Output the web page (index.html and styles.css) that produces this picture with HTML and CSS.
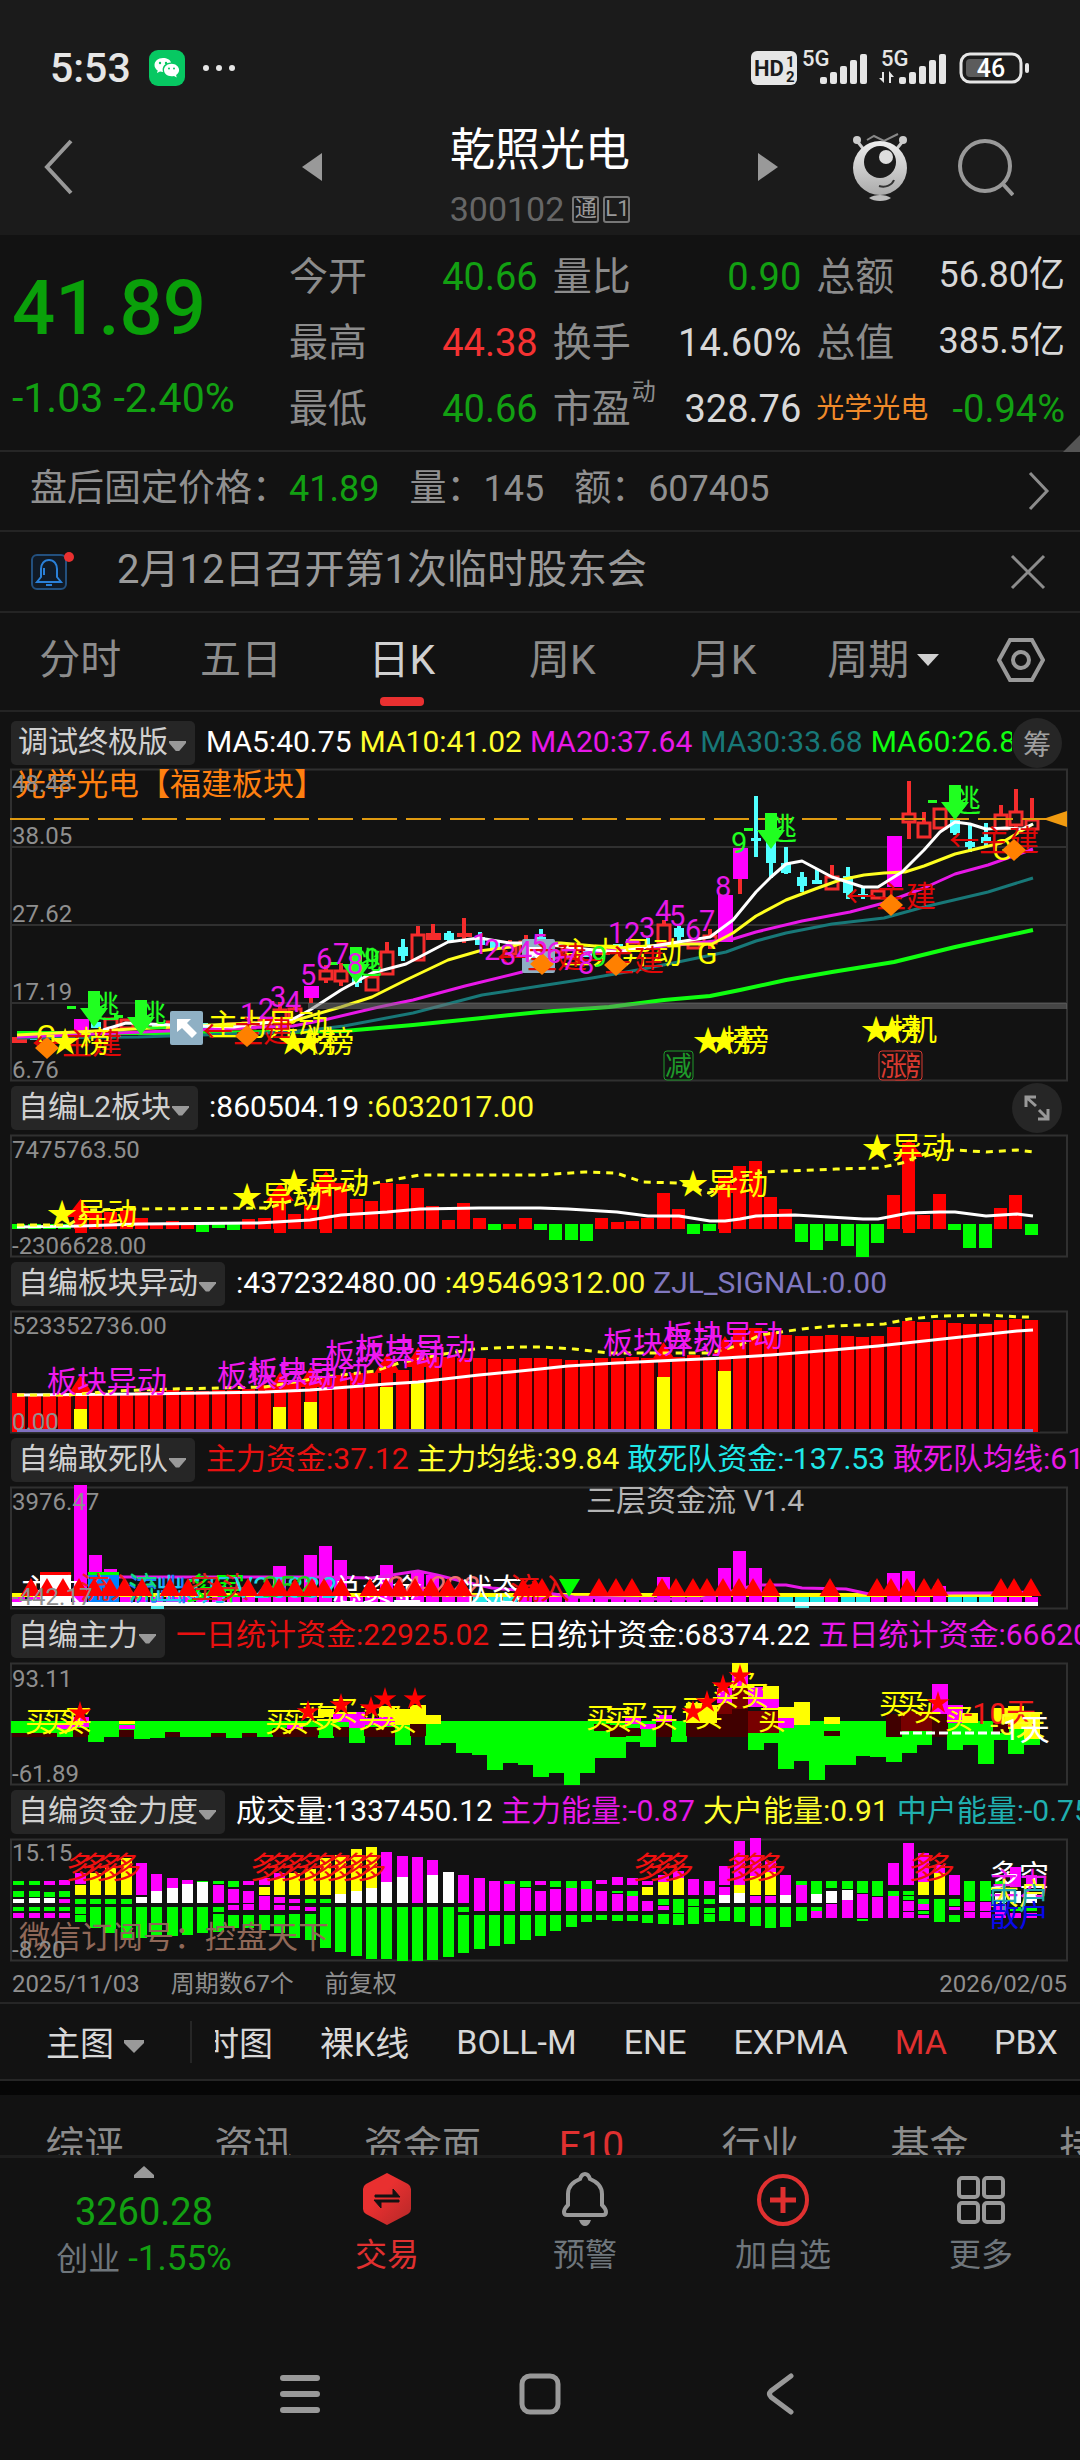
FILE: index.html
```html
<!DOCTYPE html>
<html lang="zh-CN">
<head>
<meta charset="utf-8">
<meta name="viewport" content="width=device-width, initial-scale=1">
<title>乾照光电 300102</title>
<link rel="stylesheet" href="styles.css">
</head>
<body>
<div class="top">
  <div class="status">
    <div class="status-left">
      <span class="clock">5:53</span>
      <svg class="wechat" viewBox="0 0 36 36" width="36" height="36" aria-hidden="true">
        <rect width="36" height="36" rx="9" fill="#07c862"/>
        <path d="M14 8c-5 0-8.500 3.300-8.500 7 0 2.300 1.200 4.200 3.200 5.500L8 23l3-1.500c1 .3 2 .4 3 .4-1.500-5 2-9.400 8-9.400C21.200 9.600 18 8 14 8z" fill="#fff"/>
        <path d="M22.500 13.800c-4.400 0-7.500 2.900-7.500 6.300s3.200 6.200 7.500 6.200c.9 0 1.700-.1 2.500-.3l2.700 1.600-.6-2.500c1.800-1.200 3-3 3-5 0-3.400-3.300-6.300-7.600-6.300z" fill="#fff"/>
        <g fill="#07c862"><circle cx="11" cy="13" r="1.200"/><circle cx="17" cy="13" r="1.200"/><circle cx="20" cy="18.500" r="1"/><circle cx="25" cy="18.500" r="1"/></g>
      </svg>
      <svg viewBox="0 0 32 8" width="32" height="8" aria-hidden="true"><g fill="#e6e6e6"><circle cx="3" cy="4" r="3"/><circle cx="16" cy="4" r="3"/><circle cx="29" cy="4" r="3"/></g></svg>
    </div>
    <svg class="status-right" viewBox="0 0 280 36" width="280" height="36" role="img" aria-label="HD 5G 5G 46%">
      <rect x="1" y="1" width="46" height="34" rx="6" fill="#e6e6e6"/>
      <text x="4" y="26" font-size="22" font-weight="700" fill="#1b1b1b">HD</text>
      <text x="36" y="17" font-size="15" font-weight="700" fill="#1b1b1b">1</text>
      <text x="36" y="32" font-size="15" font-weight="700" fill="#1b1b1b">2</text>
      <g fill="#e6e6e6">
        <text x="52" y="16" font-size="22" font-weight="500">5G</text>
        <text x="131" y="16" font-size="22" font-weight="500">5G</text>
        <rect x="70" y="27" width="7" height="7" rx="2"/><rect x="80" y="22" width="7" height="12" rx="2"/><rect x="90" y="16" width="7" height="18" rx="2"/><rect x="100" y="10" width="7" height="24" rx="2"/><rect x="110" y="4" width="7" height="30" rx="2"/>
        <rect x="149" y="27" width="7" height="7" rx="2"/><rect x="159" y="22" width="7" height="12" rx="2"/><rect x="169" y="16" width="7" height="18" rx="2"/><rect x="179" y="10" width="7" height="24" rx="2"/><rect x="189" y="4" width="7" height="30" rx="2"/>
        <path d="M134 22v11l-5-5h3v-6zM139 33V21l5 6h-3v6z"/>
        <rect x="275" y="13" width="4" height="10" rx="2"/>
      </g>
      <rect x="211" y="4" width="60" height="28" rx="9" fill="none" stroke="#e6e6e6" stroke-width="3"/>
      <rect x="216" y="9" width="22" height="18" rx="4" fill="#5c5c5c"/>
      <text x="241" y="27" text-anchor="middle" font-size="25" font-weight="500" fill="#fff">46</text>
    </svg>
  </div>
  <header class="header">
    <button class="icon-btn back" aria-label="返回"><svg viewBox="0 0 32 58" width="32" height="58"><path d="M28 3 4 29l24 26" class="line"/></svg></button>
    <div class="name-block">
      <button class="icon-btn" aria-label="上一只"><svg viewBox="0 0 20 28" width="20" height="28"><path d="M20 0v28L0 14z" fill="#999"/></svg></button>
      <div class="name">
        <h1>乾照光电</h1>
        <div class="code">300102 <span class="badge">通</span><span class="badge">L1</span></div>
      </div>
      <button class="icon-btn" aria-label="下一只"><svg viewBox="0 0 20 28" width="20" height="28"><path d="M0 0v28l20-14z" fill="#999"/></svg></button>
    </div>
    <div class="header-right">
      <button class="icon-btn" aria-label="智能助手">
        <svg viewBox="0 0 56 68" width="56" height="68">
          <defs><linearGradient id="body" x1="0" y1="0" x2="0" y2="1"><stop offset="0" stop-color="#eee"/><stop offset="1" stop-color="#aaa"/></linearGradient></defs>
          <path d="M5 8l8 10M51 8 43 18" stroke="#ccc" stroke-width="3"/>
          <circle cx="5" cy="7" r="4" fill="#ccc"/><circle cx="51" cy="7" r="4" fill="#ccc"/>
          <path d="M15 7l7-4 10 5 14-7" fill="none" stroke="#888" stroke-width="2"/>
          <circle cx="28" cy="35" r="27" fill="url(#body)"/>
          <circle cx="28" cy="29" r="16" fill="#1b1b1b"/><circle cx="34" cy="24" r="7" fill="#ddd"/>
          <path d="M27 53c7 2 13-1 15-6" fill="none" stroke="#333" stroke-width="2"/>
          <path d="M17 65c5-4 17-4 22 0-5 4-17 4-22 0z" fill="#bbb"/>
        </svg>
      </button>
      <button class="icon-btn" aria-label="搜索"><svg viewBox="0 0 56 58" width="56" height="58"><circle cx="27" cy="28" r="25" class="line"/><path d="M44 45l11 12" class="line"/></svg></button>
    </div>
  </header>
</div>

<section class="quote">
  <div class="last">
    <div class="price">41.89</div>
    <div class="change">-1.03 -2.40%</div>
  </div>
  <dl class="stats">
    <div><dt>今开</dt><dd class="dn">40.66</dd></div><div><dt>量比</dt><dd class="dn">0.90</dd></div><div><dt>总额</dt><dd class="small">56.80亿</dd></div>
    <div><dt>最高</dt><dd class="up">44.38</dd></div><div><dt>换手</dt><dd>14.60%</dd></div><div><dt>总值</dt><dd class="small">385.5亿</dd></div>
    <div><dt>最低</dt><dd class="dn">40.66</dd></div><div><dt>市盈<sup>动</sup></dt><dd>328.76</dd></div><div><dt class="sector">光学光电</dt><dd class="dn">-0.94%</dd></div>
  </dl>
  <svg class="corner" viewBox="0 0 17 17" width="17" height="17" aria-hidden="true"><path d="M17 0v17H0z" fill="#555"/></svg>
</section>

<a class="row after" href="#after">
  <span>盘后固定价格：<b class="dn">41.89</b></span><span>量：<b>145</b></span><span>额：<b>607405</b></span>
  <svg viewBox="0 0 22 40" width="22" height="40" aria-hidden="true"><path d="M2 2l17 18L2 38" class="thin"/></svg>
</a>
<div class="row notice">
  <svg viewBox="0 0 44 44" width="44" height="44" aria-hidden="true"><rect x="2" y="5" width="34" height="34" rx="5" fill="#101a26" stroke="#23507e" stroke-width="2"/><path d="M7 32h24l-4-5v-8c0-5-3-9-8-9s-8 4-8 9v8zM16 35h6M14 25v-7" fill="none" stroke="#2a80d8" stroke-width="2"/><circle cx="39" cy="7" r="5" fill="#e93030"/></svg>
  <a href="#notice">2月12日召开第1次临时股东会</a>
  <button class="icon-btn" aria-label="关闭"><svg viewBox="0 0 36 36" width="36" height="36"><path d="M2 2l32 32M34 2 2 34" class="thin"/></svg></button>
</div>
<nav class="periods">
  <button>分时</button><button>五日</button><button class="on">日K</button><button>周K</button><button>月K</button>
  <button>周期<svg viewBox="0 0 24 12" width="24" height="12"><path d="M1 0h22L12 12z" fill="#d0d0d0"/></svg></button>
  <button class="gear" aria-label="设置"><svg viewBox="0 0 48 44" width="48" height="44"><path d="M13 2h22l11 20-11 20H13L2 22z" class="line"/><circle cx="24" cy="22" r="8" class="line"/></svg></button>
</nav>

<main id="panels">
  <section class="panel">
    <header class="legend main"><button class="chip">调试终极版<i></i></button>
      <p><span class="c-w">MA5:40.75</span><span class="c-y">MA10:41.02</span><span class="c-m">MA20:37.64</span><span class="c-t">MA30:33.68</span><span class="c-g">MA60:26.81</span></p>
      <button class="round">筹</button></header>
    <svg class="chart" id="kline" viewBox="0 0 1080 312" role="img" aria-label="日K线"></svg>
  </section>
  <section class="panel">
    <header class="legend"><button class="chip">自编L2板块<i></i></button>
      <p><span class="c-w">:860504.19</span><span class="c-y">:6032017.00</span></p>
      <button class="round" aria-label="全屏"><svg viewBox="0 0 26 26" width="26" height="26"><path d="M2 12V2h10M2 2l10 9M24 14v10H14M24 24l-9-9" fill="none" stroke="#999" stroke-width="3"/></svg></button></header>
    <svg class="chart" id="l2" viewBox="0 0 1080 122" role="img" aria-label="自编L2板块"></svg>
  </section>
  <section class="panel">
    <header class="legend"><button class="chip">自编板块异动<i></i></button>
      <p><span class="c-w">:437232480.00</span><span class="c-y">:495469312.00</span><span class="c-p">ZJL_SIGNAL:0.00</span></p></header>
    <svg class="chart" id="sector" viewBox="0 0 1080 122" role="img" aria-label="自编板块异动"></svg>
  </section>
  <section class="panel">
    <header class="legend"><button class="chip">自编敢死队<i></i></button>
      <p><span class="c-r">主力资金:37.12</span><span class="c-y">主力均线:39.84</span><span class="c-c">敢死队资金:-137.53</span><span class="c-m">敢死队均线:61.20</span></p></header>
    <svg class="chart" id="flow" viewBox="0 0 1080 122" role="img" aria-label="自编敢死队"></svg>
  </section>
  <section class="panel">
    <header class="legend"><button class="chip">自编主力<i></i></button>
      <p><span class="c-r">一日统计资金:22925.02</span><span class="c-w">三日统计资金:68374.22</span><span class="c-m">五日统计资金:66620.10</span></p></header>
    <svg class="chart" id="major" viewBox="0 0 1080 122" role="img" aria-label="自编主力"></svg>
  </section>
  <section class="panel">
    <header class="legend"><button class="chip">自编资金力度<i></i></button>
      <p><span class="c-w">成交量:1337450.12</span><span class="c-m">主力能量:-0.87</span><span class="c-y">大户能量:0.91</span><span class="c-k">中户能量:-0.75</span></p></header>
    <svg class="chart" id="power" viewBox="0 0 1080 122" role="img" aria-label="自编资金力度"></svg>
  </section>
</main>
<div class="dates"><span>2025/11/03</span><span>周期数67个</span><span>前复权</span><span class="end">2026/02/05</span></div>

<nav class="indicators">
  <button class="pick">主图<svg viewBox="0 0 20 13" width="20" height="13"><path d="M0 0h20v3L10 13 0 3z" fill="#999"/></svg></button>
  <div class="strip"><div class="strip-in"><button>分时图</button><button>裸K线</button><button>BOLL-M</button><button>ENE</button><button>EXPMA</button><button class="on">MA</button><button>PBX</button></div></div>
</nav>
<nav class="info"><a href="#1">综评</a><a href="#2">资讯</a><a href="#3">资金面</a><a href="#4" class="on">F10</a><a href="#5">行业</a><a href="#6">基金</a><a href="#7">持仓</a></nav>

<footer class="dock">
  <a class="index" href="#index">
    <svg viewBox="0 0 20 12" width="20" height="12"><path d="M10 0l10 9v3H0V9z" fill="#999"/></svg>
    <span class="pts">3260.28</span>
    <span class="idx">创业 <b>-1.55%</b></span>
  </a>
  <button class="act on"><svg viewBox="0 0 54 54" width="54" height="54"><defs><linearGradient id="hex" x1="0" y1="0" x2="1" y2="1"><stop offset="0.400" stop-color="#e93030"/><stop offset="1" stop-color="#b42828"/></linearGradient></defs><path d="M27 1l21 11q3 2 3 5v20q0 3-3 5L27 53 6 42q-3-2-3-5V17q0-3 3-5z" fill="url(#hex)"/><path d="M15 23h18v-6l7 8H15zM39 30H21v6l-7-8h25z" fill="#121212" stroke="#121212" stroke-width="1"/></svg>交易</button>
  <button class="act"><svg viewBox="0 0 54 54" width="54" height="54"><path d="M9 43q-3 0-3-3 0-3 4-7V22C10 13 17 9 22 7c1-3 3-5 5-5s4 2 5 5c5 2 12 6 12 15v11q4 4 4 7 0 3-3 3z" fill="none" stroke="#999" stroke-width="4"/><path d="M21 48h12q-2 6-6 6t-6-6z" fill="#999"/></svg>预警</button>
  <button class="act"><svg viewBox="0 0 54 54" width="54" height="54"><circle cx="27" cy="28" r="24" fill="none" stroke="#e03030" stroke-width="4"/><path d="M27 15v26M14 28h26" stroke="#e03030" stroke-width="5"/></svg>加自选</button>
  <button class="act"><svg viewBox="0 0 54 54" width="54" height="54"><g fill="none" stroke="#999" stroke-width="4"><rect x="5" y="6" width="19" height="19" rx="3"/><rect x="30" y="6" width="19" height="19" rx="3"/><rect x="5" y="31" width="19" height="19" rx="3"/><rect x="30" y="31" width="19" height="19" rx="3"/></g></svg>更多</button>
</footer>
<div class="sysnav">
  <button class="icon-btn" aria-label="最近任务"><svg viewBox="0 0 40 42" width="40" height="42"><path d="M3 5h34M3 21h34M3 37h34" stroke="#999" stroke-width="6" stroke-linecap="round"/></svg></button>
  <button class="icon-btn" aria-label="主屏幕"><svg viewBox="0 0 42 42" width="42" height="42"><rect x="3" y="3" width="36" height="36" rx="8" fill="none" stroke="#999" stroke-width="5"/></svg></button>
  <button class="icon-btn" aria-label="返回"><svg viewBox="0 0 28 42" width="28" height="42"><path d="M25 3 5 18q-3 3 0 6l20 15" fill="none" stroke="#999" stroke-width="5" stroke-linecap="round"/></svg></button>
</div>
<script src="charts.js"></script>
</body>
</html>
```
FILE: styles.css
```css
* { box-sizing: border-box; }
body {
  margin: 0;
  background: #121212;
  color: #d8d8d8;
  font-family: Roboto, "Noto Sans CJK SC", sans-serif;
  overflow-x: hidden;
}
button { background: none; border: 0; padding: 0; margin: 0; color: inherit; font: inherit; }
a { color: inherit; text-decoration: none; }
svg { display: block; flex: none; }
.line { fill: none; stroke: #999; stroke-width: 4; }
.thin { fill: none; stroke: #8c8c8c; stroke-width: 3; }
.dn { color: #12a012; }
.up { color: #f53232; }

.top { background: #1b1b1b; }
.status { display: flex; justify-content: space-between; align-items: flex-end; height: 86px; padding: 0 50px; }
.status-left { display: flex; align-items: center; height: 36px; gap: 18px; }
.clock { font-size: 41px; line-height: 36px; color: #e6e6e6; font-weight: 500; }
.header { display: grid; grid-template-columns: 28% 1fr 28%; align-items: center; height: 149px; padding-top: 13px; }
.back { justify-self: start; margin-left: 43px; }
.name-block { display: flex; justify-content: space-between; align-items: center; }
.name { text-align: center; height: 136px; padding-top: 22px; }
.header h1 { margin: 0; font-size: 45px; line-height: 60px; font-weight: 400; color: #fff; }
.code { display: flex; align-items: center; justify-content: center; gap: 4px; font-size: 34px; line-height: 56px; color: #666; }
.badge { border: 2px solid #777; border-radius: 3px; width: 27px; height: 27px; font-size: 22px; line-height: 22px; color: #999; }
.badge:first-of-type { margin-left: 4px; }
.header-right { display: flex; align-items: center; gap: 50px; padding-left: 74px; }

.quote { display: grid; grid-template-columns: 289px 1fr; position: relative; height: 217px; padding-right: 15px; border-bottom: 2px solid #262626; }
.price { font-size: 76px; line-height: 80px; margin-top: 33px; padding-left: 12px; color: #0aa00a; font-weight: 500; }
.change { font-size: 41px; line-height: 40px; margin-top: 30px; padding-left: 12px; color: #12a012; white-space: nowrap; }
.stats { display: grid; grid-template-columns: repeat(3, 1fr); column-gap: 15px; grid-auto-rows: 66px; margin: 9px 0 0; font-size: 38px; line-height: 66px; }
.stats div { display: flex; justify-content: space-between; }
.stats dt { font-size: 39px; color: #8c8c8c; position: relative; }
.stats dt.sector { font-size: 28px; color: #f08a2a; }
.stats sup { position: absolute; left: 79px; top: -4px; font-size: 24px; line-height: 40px; }
.stats dd { margin: 0; }
.stats .small { font-size: 36px; line-height: 62px; }
.corner { position: absolute; right: 0; bottom: -2px; }

.row { display: flex; align-items: center; border-bottom: 2px solid #242424; color: #909090; }
.after { height: 80px; padding: 0 30px; gap: 30px; font-size: 37px; line-height: 74px; align-items: flex-start; }
.after b { font-weight: 400; font-size: 36px; }
.after svg { margin: 19px 0 0 auto; }
.notice { height: 81px; padding: 0 34px 0 30px; font-size: 40px; line-height: 74px; color: #9a9a9a; }
.notice a { margin-left: 43px; height: 78px; }
.notice button { margin-left: auto; }

.periods { display: flex; height: 99px; border-bottom: 2px solid #242424; font-size: 41px; line-height: 90px; color: #8c8c8c; padding-right: 2px; }
.periods button { flex: 161 1 0; display: flex; align-items: center; justify-content: center; gap: 7px; position: relative; padding-bottom: 3px; }
.periods .gear { flex-grow: 114; }
.periods .on { color: #d0d0d0; }
.periods .on::after { content: ""; position: absolute; bottom: 4px; left: calc(50% - 22px); width: 44px; height: 9px; border-radius: 4px; background: #e93030; }

.legend { display: flex; align-items: center; height: 55px; padding: 0 11px; font-size: 30px; position: relative; }
.legend.main { height: 57px; padding-top: 5px; }
.chip { display: flex; align-items: center; flex: none; height: 44px; padding: 0 9px 2px 7px; border-radius: 5px; background: #262626; color: #d0d0d0; gap: 1px; line-height: 42px; }
.chip i { width: 17px; height: 10px; background: #999; clip-path: polygon(0 0, 100% 0, 100% 20%, 60% 100%, 40% 100%, 0 20%); margin-top: 8px; }
.legend p { display: flex; gap: 8px; flex: 1; min-width: 0; margin: 0 -11px 2px 11px; overflow: hidden; white-space: nowrap; line-height: 44px; }
.legend.main p { margin-right: 57px; }
.round { position: absolute; right: 18px; top: 3px; display: flex; align-items: center; justify-content: center; width: 50px; height: 50px; border-radius: 50%; background: #262626; color: #a0a0a0; font-size: 28px; }
.legend.main .round { top: 6px; }
.c-w { color: #fff; } .c-y { color: #ffff30; } .c-m { color: #e818e8; } .c-t { color: #187878; }
.c-g { color: #10ff10; } .c-p { color: #8078c0; } .c-r { color: #e81010; } .c-c { color: #20e8e8; } .c-k { color: #20b0b0; }
.chart { width: 100%; height: auto; overflow: visible; margin-bottom: -1px; }
.chart text { font-size: 30px; }
.chart .axis { font-size: 24px; fill: #8f8f8f; }
.chart .num { font-size: 29px; }
.chart .wide { font-size: 31px; }
.chart .grid { fill: none; stroke: #303030; stroke-width: 2; }
.chart .ma { fill: none; stroke-linejoin: round; }

.dates { display: flex; height: 42px; padding: 0 13px 0 12px; font-size: 24px; line-height: 48px; color: #8f8f8f; }
.dates span { margin-right: 31px; }
.dates .end { margin: 0 0 0 auto; }

.indicators { display: flex; align-items: center; height: 79px; border-top: 2px solid #262626; border-bottom: 2px solid #262626; font-size: 34px; }
.pick { display: flex; align-items: center; gap: 10px; width: 192px; height: 42px; padding-left: 46px; border-right: 2px solid #262626; }
.pick svg { margin-top: 10px; }
.strip { flex: 1; margin-left: 23px; overflow: hidden; }
.strip-in { display: flex; gap: 47px; margin-left: -44px; white-space: nowrap; }
.strip .on { color: #e03030; }

.info { display: flex; height: 77px; border-top: 14px solid #060606; border-bottom: 3px solid #1e1e1e; overflow: hidden; font-size: 39px; line-height: 56px; color: #8c8c8c; padding-top: 23px; }
.info a { flex: 0 0 169px; text-align: center; white-space: nowrap; height: 56px; }
.info .on { color: #e03030; }

.dock { display: flex; height: 182px; padding-top: 8px; }
.index { flex: 288 1 0; display: flex; flex-direction: column; align-items: center; color: #6f767c; }
.pts { font-size: 38px; line-height: 44px; margin-top: 12px; color: #12a012; }
.idx { font-size: 32px; line-height: 44px; margin-top: 3px; }
.idx b { font-weight: 400; font-size: 35px; color: #12a012; }
.act { flex: 198 1 0; display: flex; flex-direction: column; align-items: center; justify-content: flex-start; padding-top: 6px; gap: 5px; font-size: 32px; line-height: 48px; color: #6f767c; }
.act.on { color: #e03030; }
.sysnav { display: flex; justify-content: space-around; padding: 33px 16.660% 44px; }
.sysnav button { flex: 1; display: flex; justify-content: center; }
```
FILE: charts.js
```js
// Bar geometry shared by every panel: 67 trading days on one x axis.
const STEP = 15.34, FIRST = 19.3;
const cx = i => FIRST + STEP * i;
const rect = (x, y, w, h, f, extra = '') => `<rect x="${x}" y="${y}" width="${w}" height="${h}" fill="${f}" ${extra}/>`;
const text = (x, y, s, f, cls = '') => `<text x="${x}" y="${y}" fill="${f}" class="${cls}">${s}</text>`;
const axis = (y, s) => `<text x="12" y="${y}" class="axis">${s}</text>`;
const line = (pts, c, w, dash = '') => `<polyline class="ma" points="${pts}" stroke="${c}" stroke-width="${w}" stroke-dasharray="${dash}"/>`;
const poly = (pts, f) => `<polygon points="${pts}" fill="${f}"/>`;
const diamond = (x, y) => poly(`${x},${y - 11} ${x + 12},${y} ${x},${y + 11} ${x - 12},${y}`, '#ff8000');
const triUp = (x, y, w, h, f) => poly(`${x},${y} ${x + w / 2},${y + h} ${x - w / 2},${y + h}`, f);
const star = (x, y, f) => {
  let p = '';
  for (let k = 0; k < 10; k++) {
    const r = k % 2 ? 4.5 : 12, a = Math.PI * k / 5;
    p += `${(x + r * Math.sin(a)).toFixed(1)},${(y - r * Math.cos(a)).toFixed(1)} `;
  }
  return poly(p, f);
};
const frame = (h) => `<rect class="grid" x="11" y="0.500" width="1056" height="${h}"/>`;
const put = (id, s) => { document.getElementById(id).innerHTML = s; };
const RED = '#f52c2c', CY = '#50ffff', MG = '#ff00ff', YL = '#ffff00', GR = '#00ff00';

/* ---- K line ---- */
{
  // [day, kind, body top, body bottom, wick high, wick low]
  const k = [
    [0,'R',268,274],[1,'c',268,271],[2,'r',266,272],[3,'c',262,267],[4,'m',250,264],[5,'c',253,259],[6,'r',249,258],[7,'r',250,258],[8,'c',254,260],[9,'c',254,260],
    [10,'r',252,258],[11,'r',252,258],[12,'c',254,259],[13,'c',255,260],[14,'r',254,259],[15,'r',253,258],[16,'r',250,256],
    [17,'r',240,249,233],[18,'r',239,249,236],[19,'m',217,229,217,234],[20,'r',201,209,196,214],[21,'r',201,211,194,217],[22,'c',204,214,200,218],
    [23,'r',207,220],[24,'r',182,204,173],[25,'c',178,187,170,192],[26,'r',165,190,157],[27,'R',164,171,155],[28,'c',164,171,162,173],[29,'R',164,168,149,174],
    [30,'c',168,176,163],[31,'c',171,179],[32,'r',177,184,171,187],[33,'r',172,181,166],[34,'c',168,178,160],[35,'r',176,182],[36,'r',178,188],[37,'c',180,188],[38,'R',178,186],
    [39,'c',175,180],[40,'r',173,178],[41,'c',176,179,169],[42,'r',155,173,151],[43,'c',159,168,157,173],[44,'r',172,178],[45,'r',166,173,160,180],
    [46,'m',126,173],[47,'m',79,110,79,125],[48,'c',69,72,27,88],[49,'c',71,94,60,109],[50,'c',94,104,78,105],[51,'c',108,117,103,123],[52,'c',111,115,100],
    [53,'r',107,119,96],[54,'c',107,124,98,130],[55,'c',125,128,118,130],[56,'r',121,128],[57,'m',67,118],[58,'r',44,52,12,70],[59,'r',53,67,43],
    [60,'r',39,58],[61,'c',51,64,51,66],[62,'c',73,78,56,83],[63,'c',68,74,54,78],[64,'r',45,59,36],[65,'r',42,55,20,60],[66,'r',50,59,29]];
  let s = frame(311);
  [78, 156, 234].forEach(y => s += `<path class="grid" d="M11 ${y}H1067"/>`);
  s += text(15, 26, '光学光电【福建板块】', '#ff8010', 'wide');
  for (const [i, t, a, b, hi = a, lo = b] of k) {
    const c = t === 'c' ? CY : t === 'm' ? MG : RED, x = Math.round(cx(i));
    if (hi < a) s += rect(x - 2, hi, 4, a - hi, c);
    if (lo > b) s += rect(x - 2, b, 4, lo - b, t === 'm' ? RED : c);
    if (t === 'r') s += `<rect x="${x - 6}" y="${a + 1}" width="12" height="${b - a}" fill="#121212" stroke="${c}" stroke-width="3"/>`;
    else s += rect(x - (t === 'c' ? 5 : 7), a, t === 'c' ? 10 : 15, b - a, c);
  }
  s += line('17,264 207,264 344,262 413,256 482,249 540,243 609,238 664,231 710,227 740,221 786,211 832,203 894,193 955,178 1033,161', '#10ff10', 4);
  s += line('17,269 138,268 293,263 344,257 413,244 482,226 540,217 592,209 643,200 678,193 726,183 756,172 786,164 832,155 884,149 924,138 988,123 1033,109', '#187878', 3);
  s += line('17,268 293,257 324,251 379,238 413,231 465,217 522,203 540,192 592,183 643,179 678,176 733,170 756,163 802,152 850,143 884,134 924,119 955,105 988,96 1033,80', '#e818e8', 3);
  s += line('17,266 172,258 293,252 341,238 372,228 406,211 448,191 479,182 510,178 522,174 561,174 617,179 678,175 712,175 733,164 756,147 786,131 815,120 840,111 864,106 884,104 905,103 924,97 955,85 1001,74 1033,55', '#ffff20', 3);
  s += line('103,261 126,254 172,256 234,258 293,250 310,241 341,221 372,204 406,195 448,173 479,169 510,174 540,174 574,179 617,183 647,178 678,173 710,168 733,151 756,123 771,108 786,95 802,92 832,108 863,118 878,118 902,103 924,81 940,63 955,53 970,55 986,60 1005,59 1022,60 1033,55', '#fff', 3);
  s += rect(308, 234, 759, 6, '#777', 'opacity="0.500"');
  s += line('10,50 1046,50', '#e09a10', 2, '35 9') + poly('1043,50 1067,42 1067,58', '#f09a10');
  // sell marks
  [[94, 222, 258], [141, 231, 266], [356, 178, 214], [771, 44, 80], [955, 16, 51]].forEach(([x, y, b]) => {
    s += text(x - 4, y + 26, '逃', '#20ff20') + rect(x - 27, y + 15, 9, 3, '#20ff20');
    s += poly(`${x - 6},${y} ${x + 6},${y} ${x + 6},${y + 17} ${x + 14},${y + 17} ${x},${b} ${x - 14},${y + 17} ${x - 6},${y + 17}`, '#20ff20');
  });
  // note badges
  [[170, 242], [522, 170]].forEach(([x, y]) => {
    s += rect(x, y, 33, 34, '#8fb0c4', 'rx="2"') + `<path d="M${x + 7} ${y + 8}h14l-4 4 10 10-5 5-10-10-5 4z" fill="#fff"/>`;
  });
  s += text(208, 266, '主力异动', YL) + text(562, 194, '主力异动', YL) + text(697, 195, 'G', YL) + text(36, 277, 'G', YL) + text(992, 91, 'G', YL);
  [[32, 285], [203, 273], [497, 199], [574, 202], [846, 138], [949, 82]].forEach(([x, y]) => s += text(x, y, '←主建', '#e00808'));
  [[47, 279], [247, 267], [542, 195], [616, 196], [891, 136], [1014, 81]].forEach(([x, y]) => s += diamond(x, y));
  '1,240,255 2,258,250 3,270,238 4,285,243 5,300,216 6,316,200 7,333,195 8,347,205 1,472,185 2,484,191 3,500,196 4,516,193 5,531,186 6,546,194 7,561,201 8,578,205 1,608,174 2,624,174 3,639,169 4,655,152 5,669,157 6,685,171 7,699,162 8,715,128'
    .split(' ').forEach(t => { const [n, x, y] = t.split(','); s += text(x, y, n, '#e818e8', 'num'); });
  [[364, 200], [591, 198], [731, 84]].forEach(([x, y]) => s += text(x, y, '9', '#20ff20', 'num'));
  [[50, 283, '★榜'], [278, 283, '★榜'], [294, 283, '★榜'], [693, 282, '★榜'], [709, 282, '★榜'], [861, 271, '★榜'], [877, 271, '★机']].forEach(([x, y, t]) => s += text(x, y, t, YL));
  [[664, '减', '#1f9a2a'], [893, '榜', '#d83a30'], [879, '涨', '#d83a30']].forEach(([x, t, c]) =>
    s += `<rect x="${x}" y="282" width="29" height="29" rx="3" fill="#121212" stroke="${c}" stroke-width="1"/>` + `<text x="${x + 1}" y="307" fill="${c}" style="font-size:27px">${t}</text>`);
  s += axis(23, '48.48') + axis(75, '38.05') + axis(153, '27.62') + axis(231, '17.19') + axis(309, '6.76');
  put('kline', s);
}

/* ---- L2 sector ---- */
{
  // positive: inflow height, negative: outflow height
  const v = [-5,-5,-5,-5,16,16,17,19,11,6,8,6,-8,-4,-6,10,11,26,15,24,52,46,30,28,46,45,41,23,9,26,11,-6,5,11,-6,-16,-16,-17,11,7,8,11,36,20,-10,-7,52,63,68,32,20,-18,-26,-17,-22,-33,-19,34,86,14,35,-6,-24,-24,21,34,-11];
  let s = frame(121);
  v.forEach((h, i) => { const x = Math.round(cx(i)) - 7; s += h > 0 ? rect(x, 94 - h, 13, h, '#f00') : rect(x, 89, 13, -h, GR); });
  [[4, 64], [17, 48], [20, 36], [46, 40], [58, 4]].forEach(([i, y]) => s += triUp(cx(i), y, 28, 18, '#f00') + rect(Math.round(cx(i)) - 6, y + 16, 12, 98 - y - 16, '#f00'));
  s += line('17,92 81,91 138,89 258,88 310,85 341,80 387,77 420,74 479,73 540,73 568,74 617,77 648,81 679,81 710,86 725,86 740,84 756,81 795,80 863,84 878,84 909,78 940,77 955,77 986,81 1017,79 1033,81', '#fff', 3);
  s += line('17,90 69,90 90,75 138,74 268,73 303,62 344,52 375,48 420,40 540,40 585,37 616,38 643,47 678,48 709,58 740,42 764,37 836,34 878,33 902,28 929,17 955,15 986,17 1017,15 1033,17', '#ffff20', 3, '7 6');
  [[47, 89], [232, 72], [279, 58], [678, 59], [862, 23]].forEach(([x, y]) => s += text(x, y, '★异动', YL));
  put('l2', s + axis(23, '7475763.50') + axis(119, '-2306628.00'));
}

/* ---- sector moves ---- */
{
  const top = [82,84,84,84,98,82,82,82,81,80,79,80,80,79,79,78,74,96,69,91,66,64,62,62,76,59,71,46,46,47,47,48,48,47,47,48,49,49,47,47,46,47,66,46,44,46,60,19,17,21,24,25,25,24,25,26,25,16,10,11,9,12,13,13,9,8,9];
  const alert = { 4: 64, 17: 61, 19: 56, 24: 42, 26: 36, 42: 31, 46: 25 };
  let s = frame(121);
  top.forEach((y, i) => {
    const x = Math.round(cx(i)) - 7;
    if (alert[i]) s += triUp(cx(i), alert[i], 26, 20, '#f00') + rect(x + 1, alert[i] + 18, 12, y - alert[i] - 18, '#f00') + rect(x, y, 13, 121 - y, YL);
    else s += rect(x, y, 13, 121 - y, '#f00') + rect(x + 13, y, 2, 121 - y, '#400000');
  });
  s += rect(17, 118, 1016, 3, '#8070c0');
  s += line('17,84 138,83 265,81 310,79 387,73 418,71 479,64 540,58 568,55 617,52 679,49 725,47 771,44 832,39 878,35 924,30 970,25 1017,20 1033,19', '#fff', 3);
  s += line('17,84 69,84 114,80 172,78 265,76 324,66 375,60 399,52 444,43 475,38 517,36 540,36 574,38 609,42 648,42 710,42 740,34 760,24 802,18 833,15 884,13 909,8 940,5 986,4 1022,6 1033,6', '#ffff20', 3, '7 6');
  [[47, 81], [217, 75], [248, 71], [325, 54], [355, 48], [603, 42], [663, 35]].forEach(([x, y]) => s += text(x, y, '板块异动', '#f018f0'));
  put('sector', s + axis(23, '523352736.00') + axis(119, '0.00'));
}

/* ---- three layer fund flow ---- */
{
  const tall = { 4: -2, 5: 68, 6: 82, 17: 79, 19: 68, 20: 59, 21: 73, 24: 78, 26: 84, 27: 88, 42: 90, 46: 81, 47: 64, 48: 81, 57: 86, 58: 84, 60: 99 };
  const out = [30, 31, 32, 50, 51, 52, 54, 55, 61, 62, 63];
  let s = frame(121) + rect(12, 106, 1020, 4, YL);
  for (let i = 0; i < 67; i++) {
    const x = Math.round(cx(i)) - 7;
    s += out.includes(i) ? rect(x, 110, 14, 5, '#20e8e8') : rect(x, tall[i] ?? 110, 13, 115 - (tall[i] ?? 110), MG);
  }
  s += line('81,90 148,90 320,90 372,91 418,84 437,88 465,95 492,101 540,105 574,110 657,112 700,112 756,98 786,98 802,101 846,102 869,107 955,106 988,106 1033,105', '#e818e8', 3);
  s += rect(12, 115, 1026, 4, '#fff') + rect(151, 119, 13, 3, '#50e8e8') + rect(795, 119, 14, 2, '#50e8e8');
  s += rect(40, 85, 31, 30, '#fff') + rect(40, 85, 31, 3, '#f00') + rect(88, 85, 31, 30, '#0080ff') + rect(88, 85, 31, 3, GR);
  s += text(20, 113, '主散', '#fff') + text(80, 111, '流入', '#f02020') + text(128, 113, '流出', '#2080ff') + text(128, 111, '流', '#10e080') + text(154, 113, '出5万', '#20c8f0');
  s += text(185, 112, '多军', GR) + text(190, 111, '空头', '#e02020') + text(234, 111, 'V25832', '#20d8e8') + text(262, 110, '252', '#20d020') + text(332, 113, '总资金', '#fff');
  s += text(388, 110, '24-222', '#f07070') + text(462, 113, '状态', '#fff') + text(510, 112, '流入', '#e81010');
  [90,137,184,230,272,320,360,412,495,545,630,720,775,810,857,905,940,990,1075,1120,1160,1205,1253,1300,1342,1520,1555,1573,1740,1789,1836,1923,1964,2012,2052,2099,2146,2188,2236,2411,2546,2588,2635,2682,2724,2906,2946,2994]
    .forEach(x => s += triUp(Math.round(x / 2.904), 91, 21, 18, '#f00'));
  s += poly('559,92 580,92 569,110', GR) + text(586, 24, '三层资金流 V1.4', '#b4b4b4');
  put('flow', s + axis(23, '3976.47') + axis(118, '-442.17'));
}

/* ---- main force ---- */
{
  const d = [12,12,12,16,7,21,16,9,18,17,11,16,16,12,17,12,16,7,7,6,17,7,22,7,7,24,2,24,22,32,34,49,42,44,56,52,64,52,37,37,21,26,8,21,0,0,0,0,29,22,48,40,59,44,44,35,36,41,32,24,0,29,24,43,19,33,24];
  const MR = '#400000', DR = '#780000';
  let s = frame(121);
  s += rect(12, 60, 412, 14, MR) + rect(578, 66, 160, 8, MR) + rect(825, 68, 14, 5, MR) + rect(870, 63, 77, 11, MR);
  d.forEach((h, i) => { if (h) s += rect(Math.round(cx(i)) - 8, 58, 16, h, GR); });
  // [first day, last day, top, bottom, colour]
  [[7,7,58,61,YL],[7,7,62,66,MG],[3,3,62,66,MG],[4,4,54,64,MG],[4,4,65,72,MR],[18,18,61,66,MG],[17,19,66,72,MR],[20,20,46,54,YL],[21,21,49,59,MG],[21,21,64,73,MR],[22,22,49,65,MG],[23,23,55,62,MG],[23,24,64,73,MR],
   [24,24,44,55,YL],[24,24,54,63,MG],[25,25,47,62,YL],[26,26,42,61,YL],[26,26,61,73,MR],[27,27,52,61,YL],
   [38,38,61,68,MR],[39,39,62,74,MR],[40,40,54,61,MG],[40,40,65,73,MR],[41,41,61,66,MG],[42,42,52,59,MG],[42,42,59,74,MR],[44,44,40,60,YL],[45,45,43,60,YL],[44,45,60,73,MR],
   [46,46,25,40,MG],[46,46,40,51,DR],[46,46,51,74,MR],[47,47,0,10,YL],[47,47,10,25,MG],[47,47,25,46,DR],[47,47,46,74,MR],[48,48,24,44,MG],[48,49,48,70,DR],[49,49,23,36,YL],[49,49,36,47,MG],
   [50,50,44,55,YL],[50,50,55,65,MG],[51,51,39,62,YL],[53,53,54,61,YL],[53,53,68,73,MR],[57,57,51,74,MR],[58,59,48,68,DR],[60,60,21,51,MG],[60,60,51,72,MR],[61,61,42,60,MG],[62,62,50,60,YL],
   [64,64,45,59,YL],[64,64,60,70,MR],[65,65,43,66,YL],[66,66,49,76,YL]].forEach(([a, b, t, u, c]) => s += rect(Math.round(cx(a)) - 8, t, Math.round(STEP * (b - a)) + 16, u - t, c));
  [[25,69],[41,69],[57,69],[64,67],[265,69],[281,69],[297,62],[315,65],[330,58],[358,65],[374,65],[389,68],[586,65],[604,67],[620,62],[650,65],[681,57],[695,64],[711,43],[728,32],[741,43],[758,67],[879,51],[896,51],[914,58],[945,66]]
    .forEach(([x, y]) => s += `<text x="${x}" y="${y}" fill="${YL}" style="font-size:28px">买</text>`);
  [[80,50],[308,49],[341,42],[371,45],[385,36],[415,36],[693,49],[707,39],[723,23],[740,13],[938,40]].forEach(([x, y]) => s += star(x, y, '#f00'));
  s += text(964, 61, '-10天', '#f01818') + text(990, 72, '-5天', '#ffff20') + line('900,70 1001,70', '#fff', 3, '9 4') + text(1003, 77, '1天', '#fff');
  put('major', s + axis(24, '93.11') + axis(119, '-61.89'));
}

/* ---- fund strength: stacked segments per day, sampled at 3 units per pixel ---- */
{
  const seg = `g272-285 g303-321 w327-339 g351-363 m370-385|g272-285 g303-321 w325-339 g351-363 m370-385|m272-285 g305-321 w323-339 g351-363 m370-385|m270-285 g303-321 m327-339 g351-363 m370-385|m250-283 y286-316 g327-341 g351-372 g375-395|y248-316 g327-341 g351-415|y235-316 g327-341 g351-428|y205-316 g327-341 g351-443|m220-316 w320-339 g351-443|m252-303 w303-339 g351-438|m265-294 w294-339 g351-437|m271-283 w283-339 g351-434|g272-276 w276-339 g351-428|g272-283 m285-339 g351-367 g372-425|g272-290 m297-339 m345-361 g375-415|m272-285 m303-339 m343-361 g375-415|m265-285 y290-316 m318-361 g375-420|m250-265 y265-316 m322-339 m346-361 g375-430|y250-316 m327-339 m349-361 g372-443|y237-316 g327-339 m351-363 g372-450|y203-316 g327-339 g351-475|y195-312 w312-339 g351-487|y178-303 w303-339 g351-498|y170-294 w294-339 g351-507|m186-276 w276-339 g351-507|m198-262 w262-339 g351-512|m201-339 g351-512|m211-256 w256-339 g351-510|w247-339 g351-500|m256-339 g351-366 g375-488|m264-363 g375-476|m272-363 g375-467|g272-283 m283-363 g375-461|g272-290 m293-363 g375-450|m272-285 m303-363 g375-438|g272-292 m297-363 g375-424|g272-293 m293-363 g375-411|g272-297 m297-363 g375-395|m270-283 m303-363 g375-390|m262-285 g303-309 m311-363 g375-393|m264-285 g303-318 m318-363 g375-394|m272-285 y290-316 m333-363 g375-399|m255-275 y275-316 g327-345 m347-360 g372-402|m243-263 y263-316 g327-369 g372-404|m268-316 g327-349 g351-402|m272-316 g327-341 g353-368 g372-395|m228-285 m290-316 w316-339 g351-392|m154-285 y286-310 w310-339 g351-396|m143-258 y258-316 m318-339 g351-408|m214-245 y245-316 m318-339 g351-415|m256-316 w316-339 g351-410|g272-285 m285-339 g351-393|g272-312 w312-339 g351-362 m363-385|g272-293 w303-340 m341-385|g272-298 w300-330 m331-385|g272-310 m311-385 g386-392|g272-302 g304-317 m320-385|m219-285 g303-317 m319-385|m159-285 g303-315 g318-330 m334-362 m366-385|m190-275 y275-316 g327-343 m343-360 g362-371 m374-385|m224-250 y250-316 g327-395|m256-316 g327-349 m351-360 g375-395|g272-333 m335-362 m366-385|g272-333 m335-362 m366-385|g272-290 w310-339 m341-385|m232-290 w303-339 g351-362 m370-385|m256-290 w310-339 g351-362 m370-385`.split('|');
  const col = { m: MG, g: GR, w: '#fff', y: YL };
  let s = frame(121);
  seg.forEach((day, i) => day.split(' ').forEach(p => {
    const [a, b] = p.slice(1).split('-').map(n => Math.round(n / 3) - 49);
    s += rect(Math.round(cx(i)) - 6, a, 11, b - a, col[p[0]]);
  }));
  [4,5,6,7,16,17,18,19,20,21,22,23,41,42,43,47,48,49,59,60].forEach(i => s += text(Math.round(cx(i)) - 15, 39, '多', '#f01010'));
  s += text(19, 109, '微信订阅号：控盘天下', '#906858', 'wide');
  s += text(989, 47, '多空', '#fff') + text(989, 55, '主力', '#f018f0') + text(989, 65, '大户', '#ffff20') + text(989, 70, '中户', '#20a8b0') + text(989, 87, '散户', '#0808e8');
  put('power', s + axis(22, '15.15') + axis(119, '-8.20'));
}
```
